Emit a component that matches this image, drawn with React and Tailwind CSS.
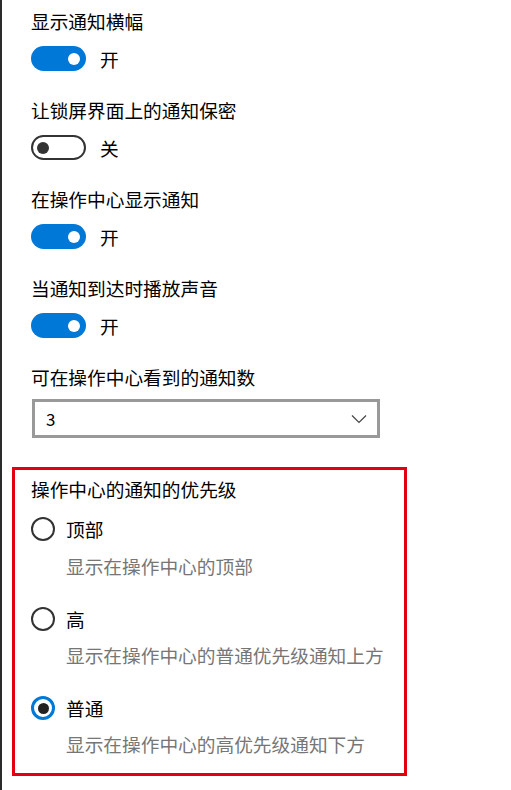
import React from 'react';

const font = { fontFamily: '"Noto Sans CJK SC", "Noto Sans", sans-serif' };

function Toggle({ on, label }) {
  return (
    <div className="flex items-center h-[25px] mt-[12px] pl-[19px]">
      {on ? (
        <div className="w-[55px] h-[25px] rounded-full bg-[#0078d7] flex items-center justify-end pr-[6px]">
          <div className="w-[12px] h-[12px] rounded-full bg-white" />
        </div>
      ) : (
        <div className="w-[55px] h-[25px] rounded-full border-[2.5px] border-[#333] flex items-center pl-[4px]">
          <div className="w-[12px] h-[12px] rounded-full bg-[#333]" />
        </div>
      )}
      <span className="ml-[14px] text-[18.7px] leading-[26px] text-black">{label}</span>
    </div>
  );
}

function Label({ children, className = '' }) {
  return (
    <div className={`h-[26px] text-[18.7px] leading-[26px] text-black pl-[19px] ${className}`}>
      {children}
    </div>
  );
}

function Radio({ checked, label, desc, first }) {
  return (
    <div className={first ? 'mt-[14px]' : 'mt-[27px]'}>
      <div className="flex items-center h-[26px] pl-[16px]">
        {checked ? (
          <div className="w-[24px] h-[24px] rounded-full border-[3px] border-[#0078d7] flex items-center justify-center">
            <div className="w-[11px] h-[11px] rounded-full bg-[#222]" />
          </div>
        ) : (
          <div className="w-[24px] h-[24px] rounded-full border-[2.5px] border-[#333]" />
        )}
        <span className="ml-[11px] text-[18.7px] leading-[26px] text-black">{label}</span>
      </div>
      <div className={`${first ? 'mt-[11px]' : 'mt-[10px]'} h-[26px] pl-[51px] text-[18.7px] leading-[26px] text-[#767676]`}>
        {desc}
      </div>
    </div>
  );
}

export default function App() {
  return (
    <div style={font} className="w-[511px] h-[790px] bg-white border-l-2 border-[#2b2b2b] pl-[10px] pt-[8px] overflow-hidden">
      <Label>显示通知横幅</Label>
      <Toggle on label="开" />

      <Label className="mt-[26px]">让锁屏界面上的通知保密</Label>
      <Toggle on={false} label="关" />

      <Label className="mt-[26px]">在操作中心显示通知</Label>
      <Toggle on label="开" />

      <Label className="mt-[26px]">当通知到达时播放声音</Label>
      <Toggle on label="开" />

      <Label className="mt-[26px]">可在操作中心看到的通知数</Label>
      <div className="ml-[20px] mt-[9px] w-[348px] h-[39px] border-[3px] border-[#999] flex items-center justify-between pl-[11px] pr-[10px]">
        <span className="text-[17px] leading-none text-black">3</span>
        <svg width="16" height="10" viewBox="0 0 16 10" fill="none">
          <path d="M1 1.5 L8 8.5 L15 1.5" stroke="#444" strokeWidth="1.2" />
        </svg>
      </div>

      <div className="mt-[29px] w-[395px] border-[3px] border-[#e2000f] pt-[6px] pb-[16px]">
        <div className="h-[26px] pl-[16px] text-[18.7px] leading-[26px] text-black">操作中心的通知的优先级</div>
        <Radio first label="顶部" desc="显示在操作中心的顶部" />
        <Radio label="高" desc="显示在操作中心的普通优先级通知上方" />
        <Radio checked label="普通" desc="显示在操作中心的高优先级通知下方" />
      </div>
    </div>
  );
}
